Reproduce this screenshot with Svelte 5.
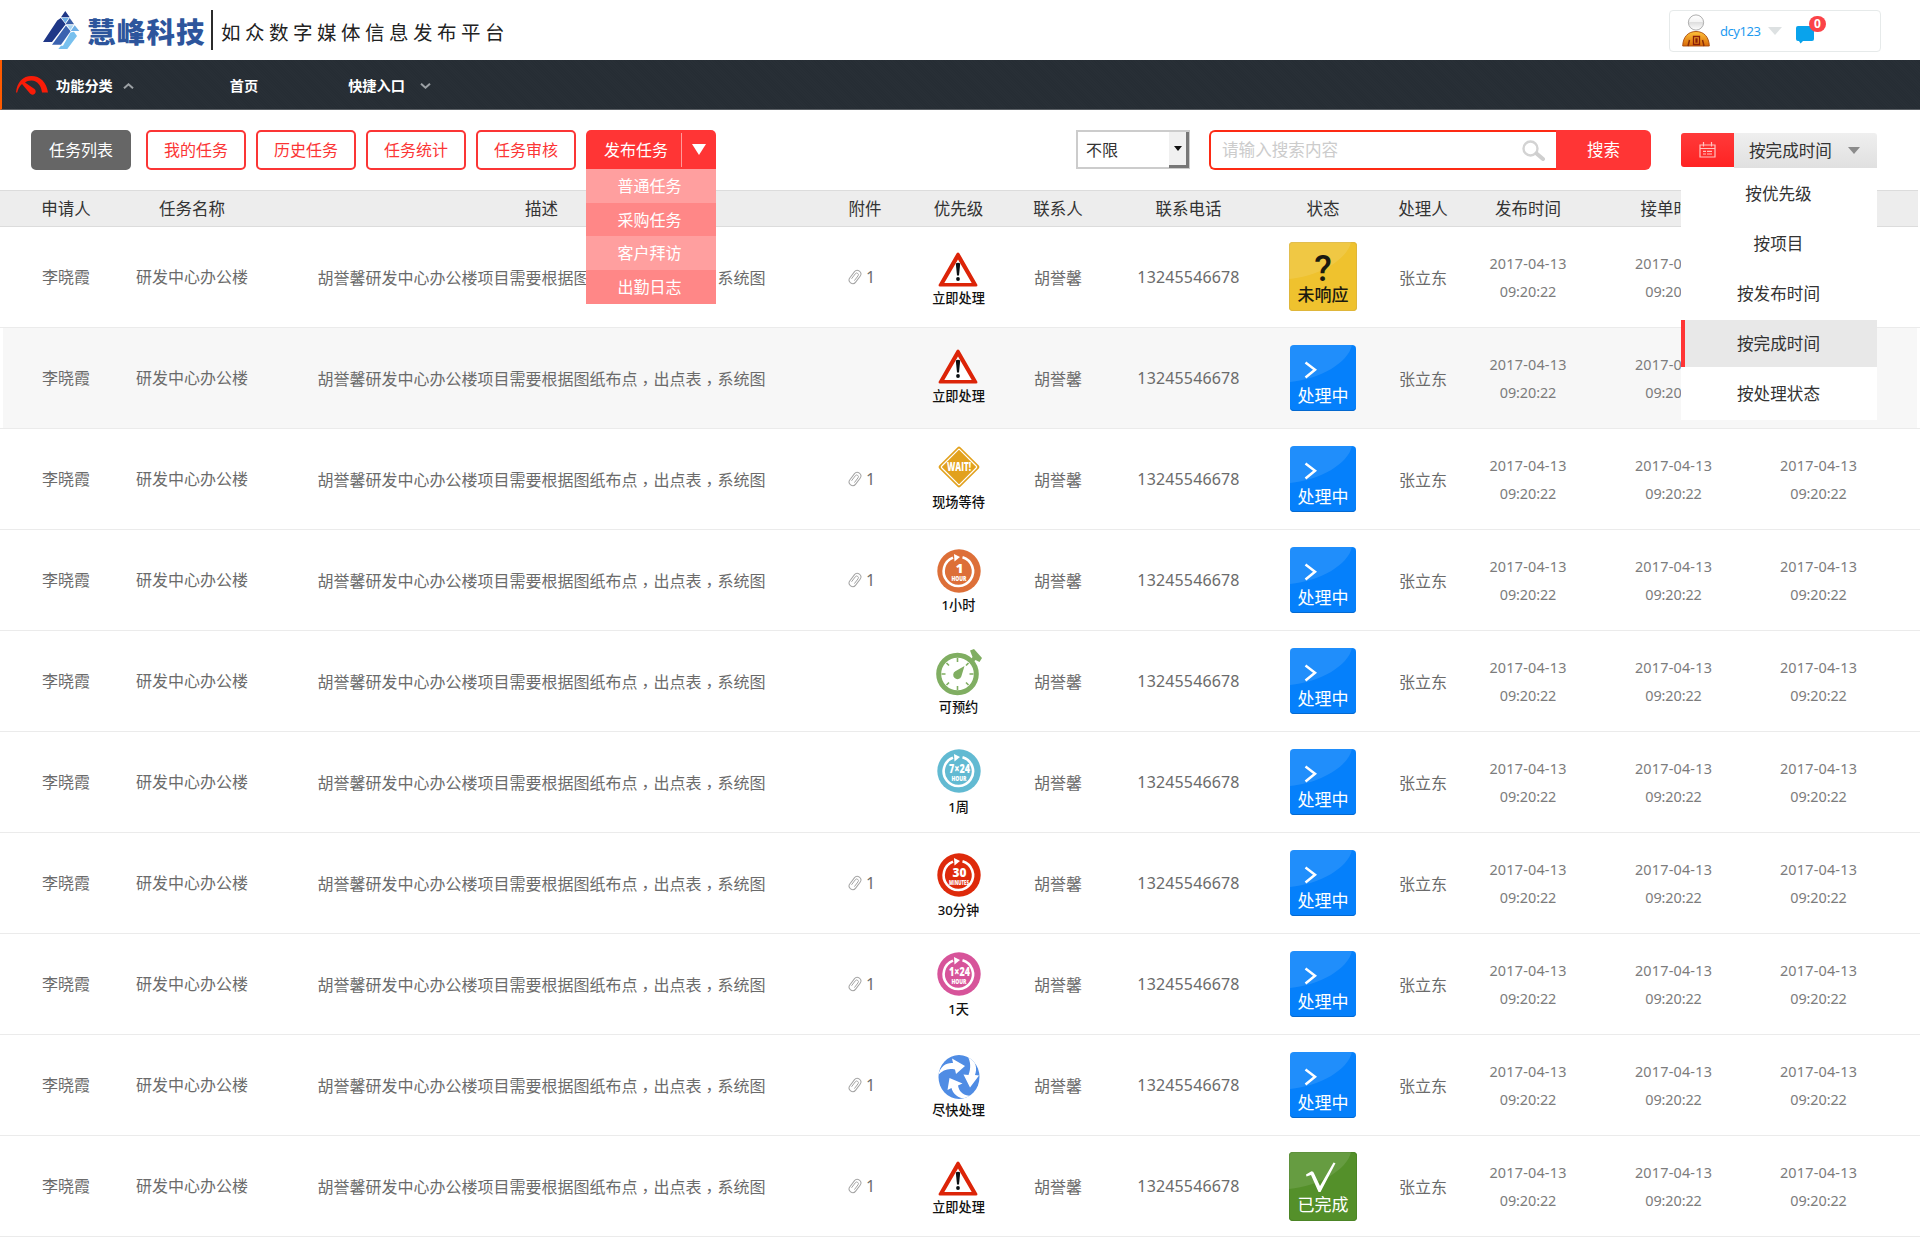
<script>
  const tabs = ['我的任务', '历史任务', '任务统计', '任务审核'];
  const publishItems = ['普通任务', '采购任务', '客户拜访', '出勤日志'];
  const sortItems = ['按优先级', '按项目', '按发布时间', '按完成时间', '按处理状态'];
  const activeSort = '按完成时间';
  const columns = ['申请人', '任务名称', '描述', '附件', '优先级', '联系人', '联系电话', '状态', '处理人', '发布时间', '接单时间', '完成时间'];

  // top: space above the priority icon, gap: space between icon and label
  const rows = [
    { file: 1, icon: 'alert', label: '立即处理', top: 25, gap: 1, status: 'pending' },
    { file: 0, icon: 'alert', label: '立即处理', top: 21, gap: 2, status: 'doing', shaded: true },
    { file: 1, icon: 'wait', label: '现场等待', top: 16, gap: 3, status: 'doing' },
    { file: 1, icon: 'clock', label: '1小时', color: '#dd6f38', big: '1', small: 'HOUR', top: 19, gap: 2, status: 'doing' },
    { file: 0, icon: 'timer', label: '可预约', top: 18, gap: 1, status: 'doing' },
    { file: 0, icon: 'clock', label: '1周', color: '#62bad2', big: '7×24', small: 'HOUR', top: 17, gap: 4, status: 'doing' },
    { file: 1, icon: 'clock', label: '30分钟', color: '#de2a0b', big: '30', small: 'MINUTES', top: 20, gap: 3, status: 'doing' },
    { file: 1, icon: 'clock', label: '1天', color: '#d7549a', big: '1×24', small: 'HOUR', top: 18, gap: 3, status: 'doing' },
    { file: 1, icon: 'cycle', label: '尽快处理', top: 20, gap: 1, status: 'doing' },
    { file: 1, icon: 'alert', label: '立即处理', top: 25, gap: 1, status: 'done' },
  ];
  const statusText = { pending: '未响应', doing: '处理中', done: '已完成' };
  const times = [0, 1, 2];
</script>

<div class="page">
  <header class="top">
    <div class="brand">
      <svg class="mark" width="37" height="40" viewBox="0 0 37 40">
        <path d="M22.300 1l4.400 6.200h-8.700zM14.200 10.500L17.800 8l4.800 6.300L9 32H0z" fill="#1f3787" />
        <path d="M26.700 8l4.400 6.300h-8.600z" fill="#3a5fa8" />
        <path d="M23 15.600l4.600 5.600L18 34.700H9z" fill="#3a62b0" />
        <path d="M18.600 7.700h7.300L22.300 13zM31.700 15.300l4.600 5.700h-8.600z" fill="#6fb0e6" />
        <path d="M24 15.300h6.500L27.500 20z" fill="#a5d3f3" />
        <path d="M27.500 22.500l3.500-.8 3 4.300L24.300 39h-9l2.700-3.300h2z" fill="#78c0ee" />
      </svg>
      <span class="name">慧峰科技</span>
      <span class="rule"></span>
      <span class="slogan">如众数字媒体信息发布平台</span>
    </div>
    <div class="user">
      <svg width="28" height="34" viewBox="0 0 28 34">
        <defs>
          <linearGradient id="robe" x1="0" y1="0" x2="0" y2="1"><stop offset="0" stop-color="#ffc33b" /><stop offset="1" stop-color="#d96a08" /></linearGradient>
          <linearGradient id="head" x1="0" y1="0" x2="0" y2="1"><stop offset="0" stop-color="#fff" /><stop offset="0.450" stop-color="#f4f4f4" /><stop offset="0.500" stop-color="#dedede" /><stop offset="1" stop-color="#fff" /></linearGradient>
        </defs>
        <circle cx="14" cy="8.500" r="7.600" fill="url(#head)" stroke="#999" stroke-width="0.800" />
        <path d="M0.700 32C1 23 6 17.500 14 17.500S27 23 27.300 32z" fill="url(#robe)" stroke="#a8490a" stroke-width="0.900" />
        <path d="M6 32l1.500-6M22 32l-1.500-6" stroke="#8a2e08" stroke-width="1.500" />
        <path d="M11.500 22.500h6v8h-6zM14 25h1v3h-1z" fill="none" stroke="#8c1f0a" stroke-width="1.300" />
      </svg>
      <span class="uname">dcy123</span>
      <svg class="utri" width="14" height="8" viewBox="0 0 14 8"><path d="M0 0h14L7 8z" fill="#dde1e2" /></svg>
      <div class="msg">
        <svg width="18" height="18" viewBox="0 0 18 18"><path d="M2 0h14a2 2 0 0 1 2 2v11a2 2 0 0 1-2 2H7l-2.500 2.500L3 15H2a2 2 0 0 1-2-2V2a2 2 0 0 1 2-2z" fill="#09a3ec" /></svg>
        <span class="badge">0</span>
      </div>
    </div>
  </header>

  <nav>
    <svg class="gauge" width="32" height="20" viewBox="0 0 32 20">
      <path d="M0 16.500C1 6 7 0 15.500 0S30.500 6 32 16.500h-6C25 9 21.500 5 15.500 4.500c-3 0-5 .8-6.500 2L18.500 13a3.200 3.200 0 1 1-4.500 4.500L6 8C3.500 10 2 13 1.200 16.500z" fill="#f91c08" />
    </svg>
    <span class="n1">功能分类</span>
    <svg class="up" width="11" height="6" viewBox="0 0 11 6"><path d="M1 5.300l4.500-4 4.500 4" fill="none" stroke="#9ba0a4" stroke-width="2" /></svg>
    <span class="n2">首页</span>
    <span class="n3">快捷入口</span>
    <svg class="down" width="11" height="6" viewBox="0 0 11 6"><path d="M1 .7l4.500 4 4.500-4" fill="none" stroke="#9ba0a4" stroke-width="2" /></svg>
  </nav>

  <div class="toolbar">
    <button class="tab current">任务列表</button>
    {#each tabs as t}<button class="tab">{t}</button>{/each}
    <div class="publish">
      <span class="ptext">发布任务</span>
      <span class="pline"></span>
      <svg width="14" height="11" viewBox="0 0 14 11"><path d="M0 0h14L7 11z" fill="#fff" /></svg>
      <div class="pmenu">
        {#each publishItems as p}<div>{p}</div>{/each}
      </div>
    </div>
    <div class="select">
      <span>不限</span>
      <i><svg width="8" height="5" viewBox="0 0 8 5"><path d="M0 0h8L4 5z" fill="#111" /></svg></i>
    </div>
    <div class="search">
      <div class="field">
        <span>请输入搜索内容</span>
        <svg width="24" height="21" viewBox="0 0 24 21"><circle cx="8.500" cy="8.500" r="7" fill="none" stroke="#d3d3d3" stroke-width="2.400" /><path d="M14.500 13.500l6.500 5.500" stroke="#cfcfcf" stroke-width="4" stroke-linecap="round" /></svg>
      </div>
      <button>搜索</button>
    </div>
    <div class="sort">
      <div class="cal">
        <svg width="17" height="16" viewBox="0 0 17 16" fill="none" stroke="#ffc4c0" stroke-width="1.200"><path d="M1 3h15v12H1zM1 6.500h15M4.500 0v4.500M12.500 0v4.500M4 9.300h3M8 9.300h5M4 12h3M8 12h5" /></svg>
      </div>
      <div class="chosen">
        <span>{activeSort}</span>
        <svg width="12" height="7" viewBox="0 0 12 7"><path d="M0 0h12L6 7z" fill="#8b8b8b" /></svg>
      </div>
      <div class="smenu">
        {#each sortItems as s}<div class:on={s === activeSort}>{s}</div>{/each}
      </div>
    </div>
  </div>

  <div class="grid head">
    {#each columns as c}<div>{c}</div>{/each}
  </div>

  {#each rows as r}
    <div class="grid row" class:shaded={r.shaded}>
      <div>李晓霞</div>
      <div>研发中心办公楼</div>
      <div class="desc"><p>胡誉馨研发中心办公楼项目需要根据图纸布点<i>，</i>出点表<i>，</i>系统图</p></div>
      <div class="file">
        {#if r.file}
          <svg width="14" height="16" viewBox="0 0 14 16" fill="none" stroke="#a3a3a3"><g transform="rotate(37 7 8)"><rect x="3.400" y="0.700" width="7.200" height="14.600" rx="3.600" stroke-width="1" /><path d="M5.300 11.500V5.200a1.700 1.700 0 0 1 3.400 0v6" stroke-width="0.900" /></g></svg>
          <span>{r.file}</span>
        {/if}
      </div>
      <div class="priority" style="padding-top: {r.top}px; gap: {r.gap}px">
        {#if r.icon === 'alert'}
          <svg class="left" width="40" height="35" viewBox="0 0 40 35"><path d="M20 1.500L38.500 33.200H1.500z" fill="#fff" /><path fill-rule="evenodd" d="M18.700 1.200q1.300-1.500 2.600 0L39.500 33q0 1.500-1.500 1.500H2Q.5 34.500.5 33zM20 7.500L6.300 31h27.400z" fill="#dc2408" /><path d="M17.800 11.500q2.200-1.500 4.400 0L21 23.500h-2z" fill="#0a0f12" /><circle cx="20" cy="27" r="1.900" fill="#0a0f12" /></svg>
        {:else if r.icon === 'wait'}
          <svg width="44" height="44" viewBox="0 0 44 44"><rect x="7" y="7" width="30" height="30" rx="2" transform="rotate(45 22 22)" fill="#e2a11d" /><rect x="9.200" y="9.200" width="25.600" height="25.600" rx="1" transform="rotate(45 22 22)" fill="none" stroke="#fff" stroke-width="1.200" /><text x="22" y="26" text-anchor="middle" textLength="24" lengthAdjust="spacingAndGlyphs" class="ico" font-size="12">WAIT!</text></svg>
        {:else if r.icon === 'clock'}
          <svg width="44" height="44" viewBox="0 0 44 44"><circle cx="22" cy="22" r="21.700" fill={r.color} /><path d="M25.500 8.200A14.700 14.700 0 1 1 16 8.600" fill="none" stroke="#fff" stroke-width="2.600" /><path d="M17 5l6 3-5.500 4.500z" fill="#fff" />
            {#if r.big === '1'}
              <text x="22.500" y="24" text-anchor="middle" class="ico" font-size="13">1</text>
            {:else}
              <text x="22.500" y="24" text-anchor="middle" textLength={r.big === '30' ? 14 : 21} lengthAdjust="spacingAndGlyphs" class="ico" font-size="13">{r.big}</text>
            {/if}
            <text x="22" y="31.500" text-anchor="middle" textLength={r.small === 'HOUR' ? 15 : 20} lengthAdjust="spacingAndGlyphs" class="ico" font-size="6">{r.small}</text>
          </svg>
        {:else if r.icon === 'timer'}
          <svg width="46" height="47" viewBox="0 0 46 47"><path d="M34 1.500l4-1.500 8 9-2.500 4-4-2-2.500 2.500-2.500-2.500 2-3z" fill="#80ae62" /><circle cx="21.500" cy="25" r="18.800" fill="#fff" stroke="#80ae62" stroke-width="5" /><path d="M21.500 9v4M21.500 37v4M5.500 25h4M33.500 25h4M10.500 14l2.500 2.500M32.500 14L30 16.500M10.500 36l2.500-2.500M32.500 36L30 33.500" stroke="#80ae62" stroke-width="1.600" /><path d="M28.500 17l-3.200 10.500a4.200 4.200 0 1 1-6-5.200z" fill="#80ae62" /></svg>
        {:else}
          <svg width="42" height="44" viewBox="0 0 42 44"><defs><clipPath id="disc"><ellipse cx="21" cy="22" rx="20.500" ry="22" /></clipPath></defs><g clip-path="url(#disc)"><rect width="42" height="44" fill="#4f8ce4" /><g fill="#fff"><path d="M0 20C3 11 8 7.500 15 8l-1-4.500L27 11l-9 8-1-4.500C10 13 5 15 0 20z" /><path d="M31 0C38 7 39.500 13 37 20l4 .5-9 12-6.500-13 5 .5C33 13 33 7 29 0z" /><path d="M34 44C22 45 15 40 13.500 33l-4 2 2-12 13 5.500-4.500 2C21 37 26 41 34 41z" /></g></g></svg>
        {/if}
        <span>{r.label}</span>
      </div>
      <div class="desc">胡誉馨</div>
      <div class="phone">13245546678</div>
      <div>
        <div class="tile {r.status}">
          <svg class="gloss" width="68" height="66" viewBox="0 0 68 66"><path d="M0 0h62C58 18 30 34 0 37z" fill="#fff" opacity="0.110" /></svg>
          {#if r.status === 'pending'}
            <b>?</b>
          {:else if r.status === 'doing'}
            <svg class="sign" width="66" height="40" viewBox="0 0 66 40"><path d="M15.500 17.500l9.500 7.300-9.500 7.700" fill="none" stroke="#fff" stroke-width="2.500" /></svg>
          {:else}
            <svg class="sign" width="66" height="42" viewBox="0 0 66 42"><path d="M17 22.500l5.500-3.200q2 0 2.500 2L31 34 44.500 10.500l2 .7L31.500 40h-2L22 23l-4.500 1.500z" fill="#fff" /></svg>
          {/if}
          <span>{statusText[r.status]}</span>
        </div>
      </div>
      <div class="desc">张立东</div>
      {#each times as t}
        <div class="time"><span class="d">2017-04-13</span><span class="t">09:20:22</span></div>
      {/each}
    </div>
  {/each}
</div>

<style>
  :global(body) { background: #fff; overflow: hidden; }
  .page { width: 1920px; height: 1237px; overflow: hidden; background: #fff; color: #666; font: 16px/20px 'Noto Sans', 'Noto Sans CJK SC', sans-serif; }
  .page * { box-sizing: border-box; white-space: nowrap; }
  svg { display: block; flex: none; }
  button { font: inherit; padding: 0; border: 0; }

  .top { height: 60px; display: flex; justify-content: space-between; padding: 10px 39px 0 43px; }
  .brand { display: flex; align-items: flex-start; height: 40px; }
  .name { margin-left: 7px; width: 122px; font-size: 28.500px; line-height: 41px; letter-spacing: 1.200px; font-weight: 900; color: #2d559c; font-family: 'Noto Sans CJK SC', sans-serif; }
  .rule { width: 2px; height: 40px; margin-left: 2px; background: #2b2b2b; }
  .slogan { margin-left: 8px; font-size: 19.500px; line-height: 43px; letter-spacing: 4.500px; color: #222; font-family: 'Noto Sans CJK SC', sans-serif; }
  .user { width: 212px; height: 42px; border: 1px solid #e6eaea; border-radius: 4px; display: flex; align-items: center; padding-left: 12px; }
  .uname { width: 42px; margin-left: 10px; font-size: 13px; letter-spacing: -0.450px; color: #1e9bf0; }
  .utri { margin-left: 6px; }
  .msg { position: relative; margin: 8px 0 0 14px; }
  .badge { position: absolute; left: 13px; top: -10px; width: 17px; height: 16px; border-radius: 8px; background: #fb4348; color: #fff; font-size: 12px; font-weight: 700; line-height: 16px; text-align: center; }

  nav { height: 50px; display: flex; align-items: center; padding: 2px 0 0 14px; border-left: 2px solid #ff5a00; border-bottom: 1px solid #5b6065; color: #fff; font-size: 14.200px; font-weight: 700; background: repeating-linear-gradient(45deg, #262d34 0 1px, #282f36 1px 2px); }
  .n1 { margin-left: 8px; }
  .up { margin-left: 10px; }
  .n2 { margin-left: 96px; }
  .n3 { margin-left: 90px; }
  .down { margin-left: 15px; }

  .toolbar { height: 80px; display: flex; align-items: flex-start; padding: 20px 0 0 31px; }
  .tab { width: 100px; height: 40px; margin-right: 10px; border: 2px solid #fb3535; border-radius: 5px; background: #fff; color: #fb3535; }
  .tab.current { margin-right: 15px; border-color: #666; background: #666; color: #fff; }
  .publish { position: relative; width: 130px; height: 39px; display: flex; align-items: center; background: #ff3535; border-radius: 5px 5px 0 0; color: #fff; }
  .ptext { margin-left: 18px; }
  .pline { width: 1px; height: 34px; margin: 0 10px 0 13px; background: #ff9a9a; }
  .pmenu { position: absolute; left: 0; top: 39px; z-index: 2; width: 130px; text-align: center; line-height: 35px; }
  .pmenu div { height: 33.700px; background: #ff9f9f; padding-right: 3px; }
  .pmenu div:nth-child(even) { background: #ff8787; }

  .select { width: 114px; height: 39px; margin-left: 360px; display: flex; justify-content: space-between; align-items: center; border: 2px solid #ccc; border-right-width: 1px; padding-left: 8px; color: #333; }
  .select i { width: 20px; height: 36px; display: flex; align-items: center; justify-content: center; background: #f0f0f0; border-right: 3px solid #777; border-bottom: 3px solid #777; }
  .search { display: flex; width: 442px; height: 40px; margin-left: 19px; }
  .field { width: 347px; display: flex; align-items: center; justify-content: space-between; border: 2px solid #fd2a14; border-right: 0; border-radius: 6px 0 0 6px; padding: 0 10px 0 11px; color: #ccc; font-size: 16.600px; }
  .search button { width: 95px; background: #ff3535; color: #fff; border-radius: 0 6px 6px 0; font-size: 16.500px; }
  .sort { position: relative; display: flex; width: 196px; height: 35px; margin: 3px 0 0 30px; color: #333; font-size: 16.600px; }
  .cal { width: 53px; height: 34px; display: flex; align-items: center; justify-content: center; background: linear-gradient(#ff3a3a, #ff2323); border-radius: 3px 0 0 3px; }
  .chosen { flex: 1; display: flex; align-items: center; justify-content: space-between; padding: 0 17px 0 15px; background: linear-gradient(#efefef, #e0e0e0); border-radius: 0 3px 0 0; }
  .smenu { position: absolute; left: 0; top: 35px; z-index: 2; width: 196px; height: 252px; padding-top: 2px; background: #fff; text-align: center; }
  .smenu div { height: 47px; margin-bottom: 3px; line-height: 48px; border-left: 4px solid transparent; padding-right: 5px; }
  .smenu .on { background: #e8e8e8; border-color: #ff3535; }

  .grid { display: grid; grid-template-columns: 132px 120px 579px 68px 119px 80px 181px 88px 112px 98px 193px 97px; }
  .grid > div { display: flex; align-items: center; justify-content: center; }
  .head { height: 37px; background: #ededed; border-top: 1px solid #dcdcdc; border-bottom: 1px solid #dcdcdc; color: #333; font-size: 16.500px; margin-right: 2px; }
  .row { height: 101px; border-bottom: 1px solid #ebebeb; color: #6b6b6b; }
  .shaded { background: linear-gradient(90deg, #fff 3px, #f7f7f7 3px 1917px, #fff 1917px); }
  .row > .desc { padding-top: 1px; }
  .desc p { margin: 0; }
  .desc i { display: inline-block; font-style: normal; transform: translate(4px, -1px); }
  .row > .file { justify-content: flex-start; padding-left: 17px; gap: 4px; }
  .row > .priority { flex-direction: column; justify-content: flex-start; color: #111; font-size: 13.200px; font-weight: 500; }
  .phone { letter-spacing: 0.150px; }
  .left { margin-left: -2px; }
  .ico { fill: #fff; font-family: 'Open Sans', sans-serif; font-weight: 800; }
  .tile { position: relative; width: 66px; height: 66px; border-radius: 4px; overflow: hidden; display: flex; justify-content: center; align-items: flex-end; color: #fff; font-size: 17px; padding-bottom: 5px; background: #0580fb; box-shadow: inset 0 -1px #0469d0; }
  .gloss, .sign { position: absolute; left: 0; top: 0; }
  .tile.pending { width: 68px; height: 69px; margin-bottom: 1px; background: #efc22e; color: #1b1a10; box-shadow: inset 0 0 0 1px #dfb63a; padding-bottom: 6px; font-weight: 500; }
  .tile.done { width: 68px; height: 69px; background: #54902a; box-shadow: inset 0 0 0 1px #4c8526; padding-bottom: 6px; }
  .tile b { position: absolute; left: 0; right: 0; top: 8px; text-align: center; font: 500 36px/38px Roboto, sans-serif; }
  .row > .time { flex-direction: column; font-size: 14.400px; line-height: 28px; color: #7c7c7c; padding-top: 2px; }
  .time span { height: 28px; }
  .d { letter-spacing: 0.200px; }
  .t { letter-spacing: -0.100px; }
</style>
